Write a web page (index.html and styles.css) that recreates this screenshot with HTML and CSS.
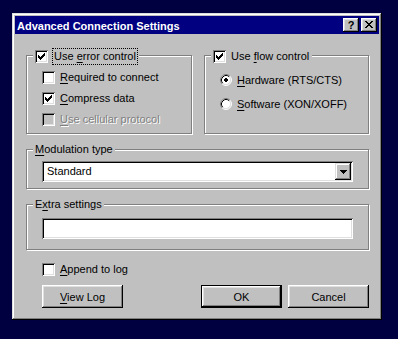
FILE: index.html
```html
<!DOCTYPE html>
<html lang="en">
  <head>
    <meta charset="UTF-8" />
    <meta name="viewport" content="width=device-width, initial-scale=1.0" />
    <title>Advanced Connection Settings</title>
    <link rel="stylesheet" href="styles.css">
  </head>
  <body>
    <div class="dialog">
      <div class="titlebar">
        <span class="title">Advanced Connection Settings</span>
        <div class="title-buttons">
          <button class="tbtn tbtn-help">?</button>
          <button class="tbtn tbtn-close">
            <svg width="8" height="7" viewBox="0 0 8 7">
              <path d="M0 0h2v1H0zM6 0h2v1H6zM1 1h2v1H1zM5 1h2v1H5zM2 2h4v1H2zM3 3h2v1H3zM2 4h4v1H2zM1 5h2v1H1zM5 5h2v1H5zM0 6h2v1H0zM6 6h2v1H6z" />
            </svg>
          </button>
        </div>
      </div>

      <div class="dialog-body">
        <div class="top-groups">
          <div class="group group-error">
            <div class="legend legend-check">
              <span class="checkbox">
                <svg width="7" height="7" viewBox="0 0 7 7"><path d="M0 2h1v3H0zM1 3h1v3H1zM2 4h1v3H2zM3 3h1v3H3zM4 2h1v3H4zM5 1h1v3H5zM6 0h1v3H6z" /></svg>
              </span>
              <span class="focus">Use <u>e</u>rror control</span>
            </div>
            <div class="option">
              <span class="checkbox"></span>
              <span><u>R</u>equired to connect</span>
            </div>
            <div class="option">
              <span class="checkbox">
                <svg width="7" height="7" viewBox="0 0 7 7"><path d="M0 2h1v3H0zM1 3h1v3H1zM2 4h1v3H2zM3 3h1v3H3zM4 2h1v3H4zM5 1h1v3H5zM6 0h1v3H6z" /></svg>
              </span>
              <span><u>C</u>ompress data</span>
            </div>
            <div class="option disabled">
              <span class="checkbox"></span>
              <span><u>U</u>se cellular protocol</span>
            </div>
          </div>

          <div class="group group-flow">
            <div class="legend legend-check">
              <span class="checkbox">
                <svg width="7" height="7" viewBox="0 0 7 7"><path d="M0 2h1v3H0zM1 3h1v3H1zM2 4h1v3H2zM3 3h1v3H3zM4 2h1v3H4zM5 1h1v3H5zM6 0h1v3H6z" /></svg>
              </span>
              <span>Use <u>f</u>low control</span>
            </div>
            <div class="option radio-option">
              <svg class="radio" width="12" height="12" viewBox="0 0 12 12">
                <circle cx="6" cy="6" r="5" fill="#fff" />
                <path d="M2.11 9.89A5.5 5.5 0 0 1 9.89 2.11" fill="none" stroke="#808080" />
                <path d="M9.89 2.11A5.5 5.5 0 0 1 2.11 9.89" fill="none" stroke="#fff" />
                <path d="M2.82 9.18A4.5 4.5 0 0 1 9.18 2.82" fill="none" stroke="#000" />
                <path d="M9.18 2.82A4.5 4.5 0 0 1 2.82 9.18" fill="none" stroke="#dfdfdf" />
                <path d="M5 4h2v1h1v2h-1v1h-2v-1h-1v-2h1z" />
              </svg>
              <span><u>H</u>ardware (RTS/CTS)</span>
            </div>
            <div class="option radio-option">
              <svg class="radio" width="12" height="12" viewBox="0 0 12 12">
                <circle cx="6" cy="6" r="5" fill="#fff" />
                <path d="M2.11 9.89A5.5 5.5 0 0 1 9.89 2.11" fill="none" stroke="#808080" />
                <path d="M9.89 2.11A5.5 5.5 0 0 1 2.11 9.89" fill="none" stroke="#fff" />
                <path d="M2.82 9.18A4.5 4.5 0 0 1 9.18 2.82" fill="none" stroke="#000" />
                <path d="M9.18 2.82A4.5 4.5 0 0 1 2.82 9.18" fill="none" stroke="#dfdfdf" />
              </svg>
              <span><u>S</u>oftware (XON/XOFF)</span>
            </div>
          </div>
        </div>

        <div class="group group-mod">
          <div class="legend"><u>M</u>odulation type</div>
          <div class="combo">
            <span class="combo-value">Standard</span>
            <span class="combo-arrow">
              <svg width="7" height="4" viewBox="0 0 7 4"><path d="M0 0h7v1H0zM1 1h5v1H1zM2 2h3v1H2zM3 3h1v1H3z" /></svg>
            </span>
          </div>
        </div>

        <div class="group group-extra">
          <div class="legend">E<u>x</u>tra settings</div>
          <div class="field"></div>
        </div>

        <div class="option append">
          <span class="checkbox"></span>
          <span><u>A</u>ppend to log</span>
        </div>

        <div class="button-row">
          <button class="btn btn-log"><u>V</u>iew Log</button>
          <button class="btn btn-default">OK</button>
          <button class="btn btn-cancel">Cancel</button>
        </div>
      </div>
    </div>
  </body>
</html>
```

FILE: styles.css
```css
body {
  margin: 0;
  padding: 13px 0 0 12px;
  background-color: #000040;
  font-family: "Liberation Sans", Arial, sans-serif;
  font-size: 11px;
  color: #000;
}
u {
  text-decoration-thickness: 1px;
  text-underline-offset: 2px;
}
.dialog {
  width: 370px;
  height: 307px;
  box-sizing: border-box;
  padding: 3px;
  background-color: #c0c0c0;
  box-shadow: inset -1px -1px #000, inset 1px 1px #dfdfdf,
    inset -2px -2px #808080, inset 2px 2px #fff;
}
.titlebar {
  height: 18px;
  display: flex;
  align-items: center;
  justify-content: space-between;
  padding: 0 2px;
  background-color: #000080;
}
.title {
  color: #fff;
  font-weight: bold;
  line-height: 18px;
  padding-top: 1px;
}
.title-buttons {
  display: flex;
  gap: 2px;
}
.tbtn {
  width: 16px;
  height: 14px;
  padding: 0;
  border: none;
  display: flex;
  background-color: #c0c0c0;
  font-family: "Liberation Sans", Arial, sans-serif;
  font-weight: bold;
  font-size: 11px;
  color: #000;
  box-shadow: inset -1px -1px #000, inset 1px 1px #fff,
    inset -2px -2px #808080, inset 2px 2px #dfdfdf;
}
.tbtn-help {
  justify-content: center;
  line-height: 14px;
}
.tbtn-close {
  padding: 3px 0 0 4px;
}
.dialog-body {
  padding: 21px 10px 0 11px;
}
.top-groups {
  display: flex;
  gap: 12px;
}
.group {
  box-sizing: border-box;
  border: 1px solid #808080;
  box-shadow: inset 1px 1px #fff, 1px 1px #fff;
}
.group-error {
  width: 166px;
  height: 79px;
}
.group-flow {
  flex: 1;
  height: 79px;
}
.group-mod {
  height: 40px;
  margin-top: 15px;
}
.group-extra {
  height: 46px;
  margin-top: 15px;
}
.legend {
  width: fit-content;
  height: 13px;
  line-height: 13px;
  margin: -7px 0 0 6px;
  padding: 0 2px;
  background-color: #c0c0c0;
}
.legend-check {
  display: flex;
  align-items: center;
  gap: 5px;
  margin-top: -6px;
  padding-right: 3px;
}
.focus {
  margin-left: 1px;
  outline: 1px dotted #000;
  outline-offset: 1px;
}
.option {
  display: flex;
  align-items: center;
  gap: 5px;
  height: 13px;
  line-height: 13px;
  margin: 8px 0 0 15px;
}
.radio-option {
  align-items: flex-start;
  margin-top: 11px;
}
.radio {
  display: block;
  flex: none;
}
.checkbox {
  width: 13px;
  height: 13px;
  box-sizing: border-box;
  padding: 3px;
  display: flex;
  flex: none;
  background-color: #fff;
  box-shadow: inset 1px 1px #808080, inset -1px -1px #fff,
    inset 2px 2px #000, inset -2px -2px #dfdfdf;
}
.disabled {
  color: #808080;
  text-shadow: 1px 1px #fff;
}
.disabled .checkbox {
  background-color: #c0c0c0;
}
.combo,
.field {
  height: 21px;
  box-sizing: border-box;
  padding: 2px;
  background-color: #fff;
  box-shadow: inset 1px 1px #808080, inset -1px -1px #fff,
    inset 2px 2px #000, inset -2px -2px #dfdfdf;
}
.combo {
  display: flex;
  margin: 5px 15px 0;
}
.field {
  margin: 7px 15px 0;
}
.combo-value {
  flex: 1;
  padding-left: 3px;
  line-height: 17px;
}
.combo-arrow {
  width: 16px;
  height: 17px;
  display: flex;
  align-items: center;
  justify-content: center;
  background-color: #c0c0c0;
  box-shadow: inset -1px -1px #000, inset 1px 1px #dfdfdf,
    inset -2px -2px #808080, inset 2px 2px #fff;
}
.append {
  margin: 13px 0 0 16px;
}
.button-row {
  display: flex;
  margin-top: 9px;
}
.btn {
  width: 81px;
  height: 23px;
  padding: 0;
  border: none;
  background-color: #c0c0c0;
  font-family: "Liberation Sans", Arial, sans-serif;
  font-size: 11px;
  color: #000;
  box-shadow: inset -1px -1px #000, inset 1px 1px #fff,
    inset -2px -2px #808080, inset 2px 2px #dfdfdf;
}
.btn-log {
  margin-left: 16px;
}
.btn-default {
  margin-left: auto;
  box-shadow: inset 0 0 0 1px #000, inset -2px -2px #000, inset 2px 2px #fff,
    inset -3px -3px #808080, inset 3px 3px #dfdfdf;
}
.btn-cancel {
  margin-left: 6px;
}
```
